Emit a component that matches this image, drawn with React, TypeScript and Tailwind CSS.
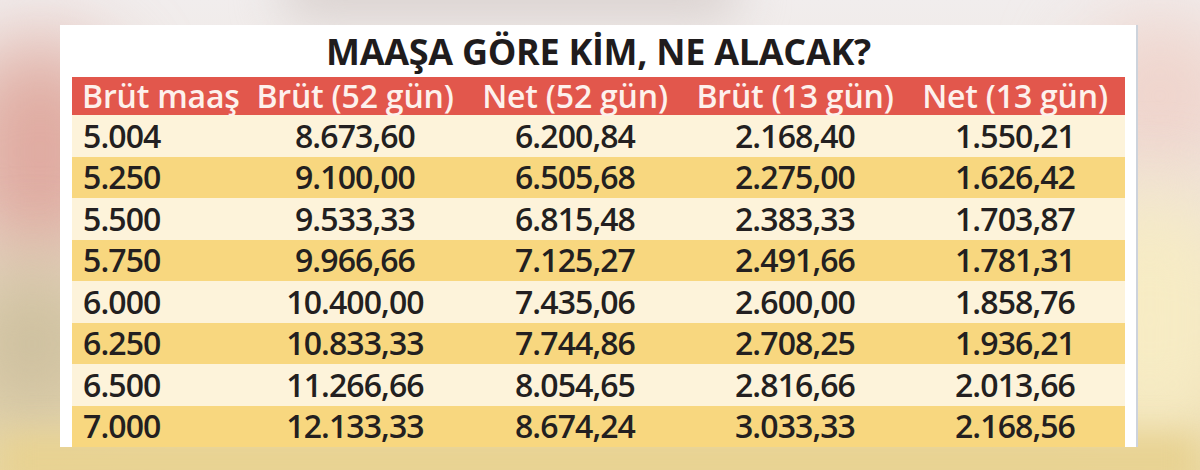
const rows: string[][] = [
  ['5.004', '8.673,60', '6.200,84', '2.168,40', '1.550,21'],
  ['5.250', '9.100,00', '6.505,68', '2.275,00', '1.626,42'],
  ['5.500', '9.533,33', '6.815,48', '2.383,33', '1.703,87'],
  ['5.750', '9.966,66', '7.125,27', '2.491,66', '1.781,31'],
  ['6.000', '10.400,00', '7.435,06', '2.600,00', '1.858,76'],
  ['6.250', '10.833,33', '7.744,86', '2.708,25', '1.936,21'],
  ['6.500', '11.266,66', '8.054,65', '2.816,66', '2.013,66'],
  ['7.000', '12.133,33', '8.674,24', '3.033,33', '2.168,56'],
];

const headers = ['Brüt maaş', 'Brüt (52 gün)', 'Net (52 gün)', 'Brüt (13 gün)', 'Net (13 gün)'];

function Backdrop() {
  // blurred photo behind the clipping
  return (
    <div className="absolute inset-0 overflow-hidden bg-gradient-to-b from-[#f1eded] via-[#eee3d6] to-[#ead9a6]">
      <div className="absolute -left-10 top-10 w-40 h-56 rounded-full bg-[#dfaaa0] blur-2xl" />
      <div className="absolute -left-10 top-64 w-36 h-44 rounded-full bg-[#cdbf9e] blur-2xl" />
      <div className="absolute left-[280px] -top-8 w-[460px] h-12 rounded-full bg-[#d6cdca] blur-xl" />
      <div className="absolute right-[-40px] top-4 w-40 h-40 rounded-full bg-[#efd3cb] blur-2xl" />
      <div className="absolute right-[-30px] top-48 w-40 h-64 rounded-full bg-[#f7ecc4] blur-2xl" />
      <div className="absolute left-0 right-0 bottom-[-20px] h-14 bg-[#e8d291] blur-lg" />
    </div>
  );
}

export default function App() {
  return (
    <div className="relative w-[1200px] h-[470px] overflow-hidden" style={{ fontFamily: '"Open Sans", "Noto Sans", sans-serif' }}>
      <Backdrop />
      <div className="relative ml-[60px] mt-[25px] w-[1078px] h-[422px] bg-white border-r-2 border-[#cdd3dc] pl-[12px] pr-[11px] flex flex-col">
        <h1 className="h-[52px] flex items-center justify-center pt-[2px] text-[36px] font-bold text-[#1f1c1d] tracking-[-0.3px]">
          MAAŞA GÖRE KİM, NE ALACAK?
        </h1>
        <table className="w-[1053px] table-fixed border-collapse">
          <colgroup>
            <col className="w-[173px]" />
            <col className="w-[220px]" />
            <col className="w-[220px]" />
            <col className="w-[220px]" />
            <col className="w-[220px]" />
          </colgroup>
          <thead>
            <tr className="h-[38px] bg-[#e2574c] text-[#fdf1ec]">
              {headers.map((h, i) => (
                <th
                  key={h}
                  className={`p-0 text-[32px] font-semibold leading-none whitespace-nowrap tracking-[-0.2px] ${i === 0 ? 'text-left pl-[10px]' : 'text-center'}`}
                >
                  {h}
                </th>
              ))}
            </tr>
          </thead>
          <tbody>
            {rows.map((r, ri) => (
              <tr key={r[0]} className={`h-[41.5px] ${ri % 2 === 0 ? 'bg-[#fdf3da]' : 'bg-[#f8d77f]'}`}>
                {r.map((v, ci) => (
                  <td
                    key={ci}
                    className={`p-0 text-[32px] font-semibold leading-none text-[#231f20] tracking-[-0.9px] ${ci === 0 ? 'text-left pl-[11px]' : 'text-center'}`}
                  >
                    {v}
                  </td>
                ))}
              </tr>
            ))}
          </tbody>
        </table>
      </div>
    </div>
  );
}
